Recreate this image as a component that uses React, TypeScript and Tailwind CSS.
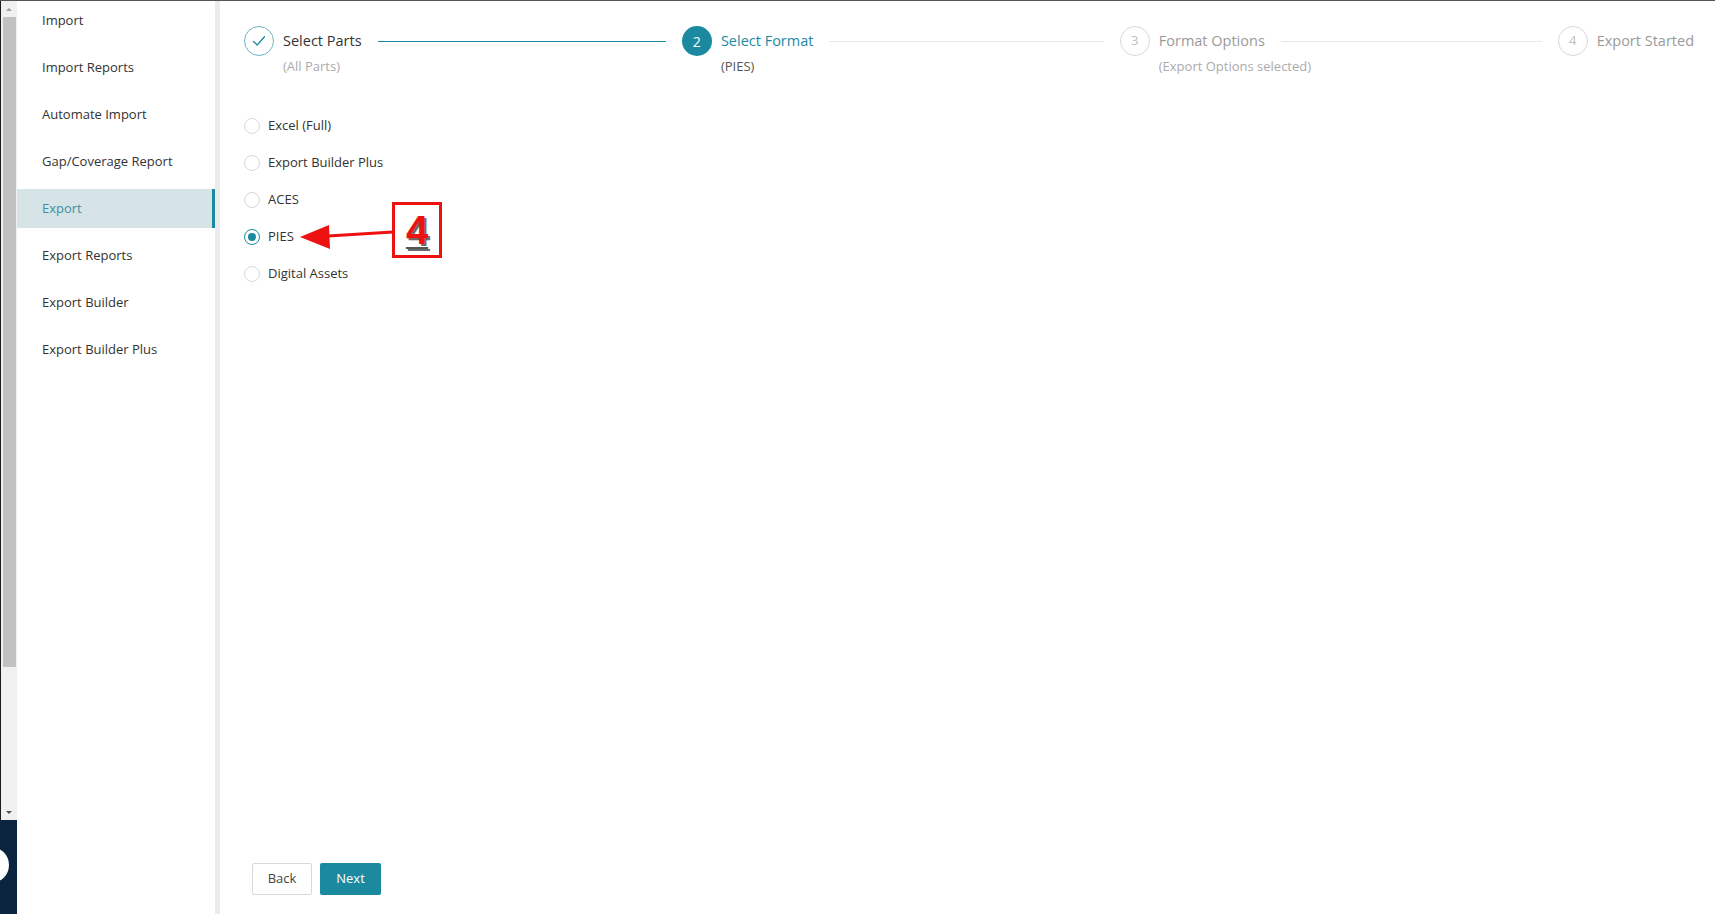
import React from "react";

const FONT = { fontFamily: '"Open Sans", "Noto Sans", sans-serif' };

const navItems = [
  "Import",
  "Import Reports",
  "Automate Import",
  "Gap/Coverage Report",
  "Export",
  "Export Reports",
  "Export Builder",
  "Export Builder Plus",
];

const radios = ["Excel (Full)", "Export Builder Plus", "ACES", "PIES", "Digital Assets"];

function StepCircle({ state, n }: { state: "done" | "active" | "wait"; n: number }) {
  if (state === "done") {
    return (
      <div className="w-[30px] h-[30px] shrink-0 rounded-full border border-[#6fb3c2] flex items-center justify-center">
        <svg width="16" height="16" viewBox="0 0 16 16" fill="none">
          <path d="M2.5 8.5 L6.2 12 L13.5 3.8" stroke="#1b8aa0" strokeWidth="1.3" strokeLinecap="round" strokeLinejoin="round" />
        </svg>
      </div>
    );
  }
  if (state === "active") {
    return (
      <div className="w-[30px] h-[30px] shrink-0 rounded-full bg-[#1b8aa0] text-white flex items-center justify-center text-[14px]">
        {n}
      </div>
    );
  }
  return (
    <div className="w-[30px] h-[30px] shrink-0 rounded-full border border-[#d9d9d9] text-[#c0c0c0] flex items-center justify-center text-[13px]">
      {n}
    </div>
  );
}

function Step({
  n,
  state,
  title,
  desc,
  last,
}: {
  n: number;
  state: "done" | "active" | "wait";
  title: string;
  desc: string;
  last?: boolean;
}) {
  const titleColor = state === "done" ? "text-[#333]" : state === "active" ? "text-[#1b8aa0]" : "text-[#9a9a9a]";
  const descColor = state === "active" ? "text-[#555]" : "text-[#ababab]";
  const lineColor = state === "done" ? "bg-[#1b8aa0]" : "bg-[#e8e8e8]";
  return (
    <div className={`flex ${last ? "flex-none" : "flex-1"}`}>
      <StepCircle state={state} n={n} />
      <div className="ml-[9px] flex-1 flex flex-col">
        <div className="h-[30px] flex items-center">
          <span className={`text-[14.5px] whitespace-nowrap ${titleColor}`}>{title}</span>
          {!last && <div className={`ml-4 flex-1 h-px ${lineColor}`} />}
        </div>
        <div className={`text-[13px] leading-[20px] whitespace-nowrap ${descColor}`}>{desc}</div>
      </div>
    </div>
  );
}

export default function App() {
  return (
    <div className="w-full h-[914px] flex border-t border-[#555] bg-white overflow-hidden" style={FONT}>
      {/* left window scrollbar strip */}
      <div className="w-[17px] shrink-0 flex flex-col">
        <div className="h-[819px] flex">
          <div className="w-px bg-[#1c1c1c]" />
          <div className="flex-1 bg-[#f0f0f0] flex flex-col items-center">
            <div className="h-[16px] flex items-center justify-center">
              <div className="w-0 h-0 border-l-[3px] border-r-[3px] border-b-[3px] border-l-transparent border-r-transparent border-b-[#a0a0a0]" />
            </div>
            <div className="w-[13px] h-[650px] bg-[#c1c1c1]" />
            <div className="flex-1" />
            <div className="h-[16px] flex items-center justify-center">
              <div className="w-0 h-0 border-l-[3px] border-r-[3px] border-t-[3px] border-l-transparent border-r-transparent border-t-[#505050]" />
            </div>
          </div>
        </div>
        <div className="flex-1 bg-[#0b2440] overflow-hidden pt-[27px]">
          <div className="w-[36px] h-[36px] rounded-full bg-white -ml-[27px]" />
        </div>
      </div>

      {/* sidebar */}
      <div className="w-[198px] shrink-0 bg-white flex flex-col">
        {navItems.map((item) => {
          const active = item === "Export";
          return (
            <div
              key={item}
              className={`h-[39px] mb-[8px] flex items-center pl-[25px] text-[13px] ${
                active ? "bg-[#d6e4e7] text-[#3d8fa2] border-r-[3px] border-[#1b8aa0]" : "text-[#333]"
              }`}
            >
              {item}
            </div>
          );
        })}
      </div>
      <div className="w-[5px] shrink-0 bg-[#ebebf0]" />

      {/* main */}
      <div className="flex-1 relative flex flex-col pl-[24px] pr-[21px] pt-[25px] pb-[19px]">
        <div className="flex gap-4">
          <Step n={1} state="done" title="Select Parts" desc="(All Parts)" />
          <Step n={2} state="active" title="Select Format" desc="(PIES)" />
          <Step n={3} state="wait" title="Format Options" desc="(Export Options selected)" />
          <Step n={4} state="wait" title="Export Started" desc="" last />
        </div>

        <div className="mt-[31px] flex flex-col">
          {radios.map((r) => {
            const checked = r === "PIES";
            return (
              <label key={r} className="h-[37px] flex items-center">
                {checked ? (
                  <span className="w-[16px] h-[16px] rounded-full border border-[#1b8aa0] flex items-center justify-center">
                    <span className="w-[8px] h-[8px] rounded-full bg-[#1b8aa0]" />
                  </span>
                ) : (
                  <span className="w-[16px] h-[16px] rounded-full border border-[#d9d9d9] bg-white" />
                )}
                <span className="ml-[8px] text-[13px] text-[#333]">{r}</span>
              </label>
            );
          })}
        </div>

        <div className="flex-1" />

        <div className="flex gap-2 pl-[8px]">
          <button className="w-[60px] h-[32px] border border-[#d9d9d9] bg-white text-[13px] text-[#444] rounded-[2px]">
            Back
          </button>
          <button className="w-[61px] h-[32px] bg-[#1b8aa0] text-white text-[13px] rounded-[2px]">Next</button>
        </div>

        {/* annotation */}
        <svg
          className="absolute left-[78px] top-[219px]"
          width="100"
          height="30"
          viewBox="0 0 100 30"
        >
          <line x1="30" y1="16" x2="95" y2="12" stroke="#ee1111" strokeWidth="3" />
          <polygon points="2,17 31,5 32,29" fill="#ee1111" />
        </svg>
        <div className="absolute left-[172px] top-[201px] w-[50px] h-[56px] border-[3px] border-[#ee1111] flex items-center justify-center">
          <span
            className="text-[40px] leading-none font-bold text-[#ee1111] underline decoration-[#555] decoration-2 underline-offset-[3px]"
            style={{ fontFamily: '"Liberation Sans", Arial, sans-serif', textShadow: "2px 2px 0 #6b6b6b" }}
          >
            4
          </span>
        </div>
      </div>
    </div>
  );
}
